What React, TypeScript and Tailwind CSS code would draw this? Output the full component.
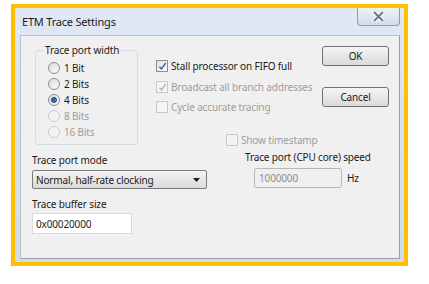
import React from "react";

const font = { fontFamily: '"Noto Sans", "Open Sans", sans-serif' };
const T = "text-[10px] leading-[14px] tracking-[-0.15px] whitespace-nowrap";

function Radio({ checked, disabled, label }: { checked?: boolean; disabled?: boolean; label: string }) {
  return (
    <div className="flex items-center h-[16px]">
      <div
        className={
          "w-[12px] h-[12px] rounded-full border flex items-center justify-center " +
          (disabled
            ? "border-[#cfcfcf] bg-[#f3f3f3]"
            : "border-[#8c8c8c] bg-gradient-to-br from-[#dcdcdc] to-[#fbfbfb]")
        }
      >
        {checked && (
          <div className="w-[6px] h-[6px] rounded-full bg-gradient-to-br from-[#0f4f8f] to-[#35a3e6] border border-[#0b3b6e]" />
        )}
      </div>
      <span className={"ml-[4px] " + T + " " + (disabled ? "text-[#9d9d9d]" : "text-[#1b1b1b]")}>{label}</span>
    </div>
  );
}

function Check({ checked, disabled, label }: { checked?: boolean; disabled?: boolean; label: string }) {
  return (
    <div className="flex items-center h-[20px]">
      <div
        className={
          "w-[12px] h-[12px] border flex items-center justify-center " +
          (disabled ? "border-[#c9c9c9] bg-[#f4f4f4]" : "border-[#8e8f8f] bg-gradient-to-br from-[#e0e0e0] to-[#fafafa]")
        }
      >
        {checked && (
          <svg width="9" height="9" viewBox="0 0 9 9">
            <path
              d="M1.5 4.8 L3.5 7 L7.6 1.2"
              fill="none"
              stroke={disabled ? "#b5b5b5" : "#3b5a9a"}
              strokeWidth="1.4"
            />
          </svg>
        )}
      </div>
      <span className={"ml-[3px] " + T + " " + (disabled ? "text-[#9d9d9d]" : "text-[#1b1b1b]")}>{label}</span>
    </div>
  );
}

function Btn({ label }: { label: string }) {
  return (
    <div className={"w-[67px] h-[20px] rounded-[3px] border border-[#707070] bg-gradient-to-b from-[#f5f5f5] to-[#dadada] flex items-center justify-center text-[#1b1b1b] " + T}>
      {label}
    </div>
  );
}

export default function App() {
  return (
    <div className="w-[429px] h-[284px] bg-white pl-[11px] pt-[4px]" style={font}>
      <div className="w-[397px] h-[262px] border-4 border-[#ffc000] flex flex-col bg-gradient-to-b from-[#dfe8f3] to-[#cfdcec]">
        {/* Title bar */}
        <div className="h-[27px] flex items-start shrink-0">
          <div className="pl-[7px] pt-[7px] text-[11px] leading-[14px] tracking-[-0.2px] whitespace-nowrap text-[#1a1a1a] flex-1">ETM Trace Settings</div>
          <div className="mr-[4px] w-[43px] h-[18px] rounded-b-[4px] border border-t-0 border-[#8f9cb0] bg-gradient-to-b from-[#eef2f7] to-[#d3dce7] flex items-center justify-center">
            <svg width="13" height="11" viewBox="0 0 13 11">
              <path d="M2.5 1.5 L10.5 9.5 M10.5 1.5 L2.5 9.5" stroke="#ffffff" strokeWidth="4" strokeLinecap="round" />
              <path d="M2.5 1.5 L10.5 9.5 M10.5 1.5 L2.5 9.5" stroke="#6b7787" strokeWidth="2" strokeLinecap="round" />
            </svg>
          </div>
        </div>
        {/* Panel */}
        <div className="ml-[5px] mr-[4px] h-[224px] bg-[#f0f0f0] border border-[#b9c2cc] border-r-[#9aa0a6] border-b-[#9aa0a6] flex flex-col">
          {/* Top block */}
          <div className="flex items-start h-[110px]">
            <fieldset className="ml-[14px] mt-[7px] w-[103px] h-[102px] border border-[#d5dde4] rounded-[3px] pl-[12px]">
              <legend className={"ml-[-5px] px-[2px] text-[#1b1b1b] " + T}>Trace port width</legend>
              <div className="flex flex-col mt-[3px]">
                <Radio label="1 Bit" />
                <Radio label="2 Bits" />
                <Radio checked label="4 Bits" />
                <Radio disabled label="8 Bits" />
                <Radio disabled label="16 Bits" />
              </div>
            </fieldset>
            <div className="ml-[18px] pt-[20px] flex flex-col w-[166px]">
              <Check checked label="Stall processor on FIFO full" />
              <div className="mt-[1px]">
                <Check checked disabled label="Broadcast all branch addresses" />
              </div>
              <Check disabled label="Cycle accurate tracing" />
              <div className="mt-[13px] ml-[70px]">
                <Check disabled label="Show timestamp" />
              </div>
            </div>
            <div className="pt-[10px] flex flex-col gap-[21px]">
              <Btn label="OK" />
              <Btn label="Cancel" />
            </div>
          </div>
          {/* Bottom block */}
          <div className="flex items-start">
            <div className="pl-[11px] pt-[7px] flex flex-col w-[187px]">
              <div className={"text-[#1b1b1b] " + T}>Trace port mode</div>
              <div className="mt-[3px] w-[175px] h-[19px] rounded-[2px] border border-[#7a7a7a] bg-gradient-to-b from-[#f3f3f3] to-[#dcdcdc] flex items-center pl-[3px] pr-[6px]">
                <span className={"flex-1 text-[#1b1b1b] " + T}>Normal, half-rate clocking</span>
                <svg width="7" height="4" viewBox="0 0 7 4">
                  <path d="M0 0 L7 0 L3.5 4 Z" fill="#1b1b1b" />
                </svg>
              </div>
              <div className={"mt-[8px] text-[#1b1b1b] " + T}>Trace buffer size</div>
              <div className={"mt-[2px] w-[100px] h-[21px] border border-[#d7dbe0] bg-white flex items-center pl-[3px] text-[#1b1b1b] " + T}>
                0x00020000
              </div>
            </div>
            <div className="ml-[37px] pt-[4px] flex flex-col">
              <div className={"text-[#1b1b1b] " + T}>Trace port (CPU core) speed</div>
              <div className="mt-[4px] ml-[9px] flex items-center">
                <div className={"w-[88px] h-[20px] rounded-[2px] border border-[#b8b8b8] bg-[#f0f0f0] flex items-center pl-[4px] text-[#8d8d8d] " + T}>
                  1000000
                </div>
                <span className={"ml-[5px] text-[#1b1b1b] " + T}>Hz</span>
              </div>
            </div>
          </div>
        </div>
      </div>
    </div>
  );
}
